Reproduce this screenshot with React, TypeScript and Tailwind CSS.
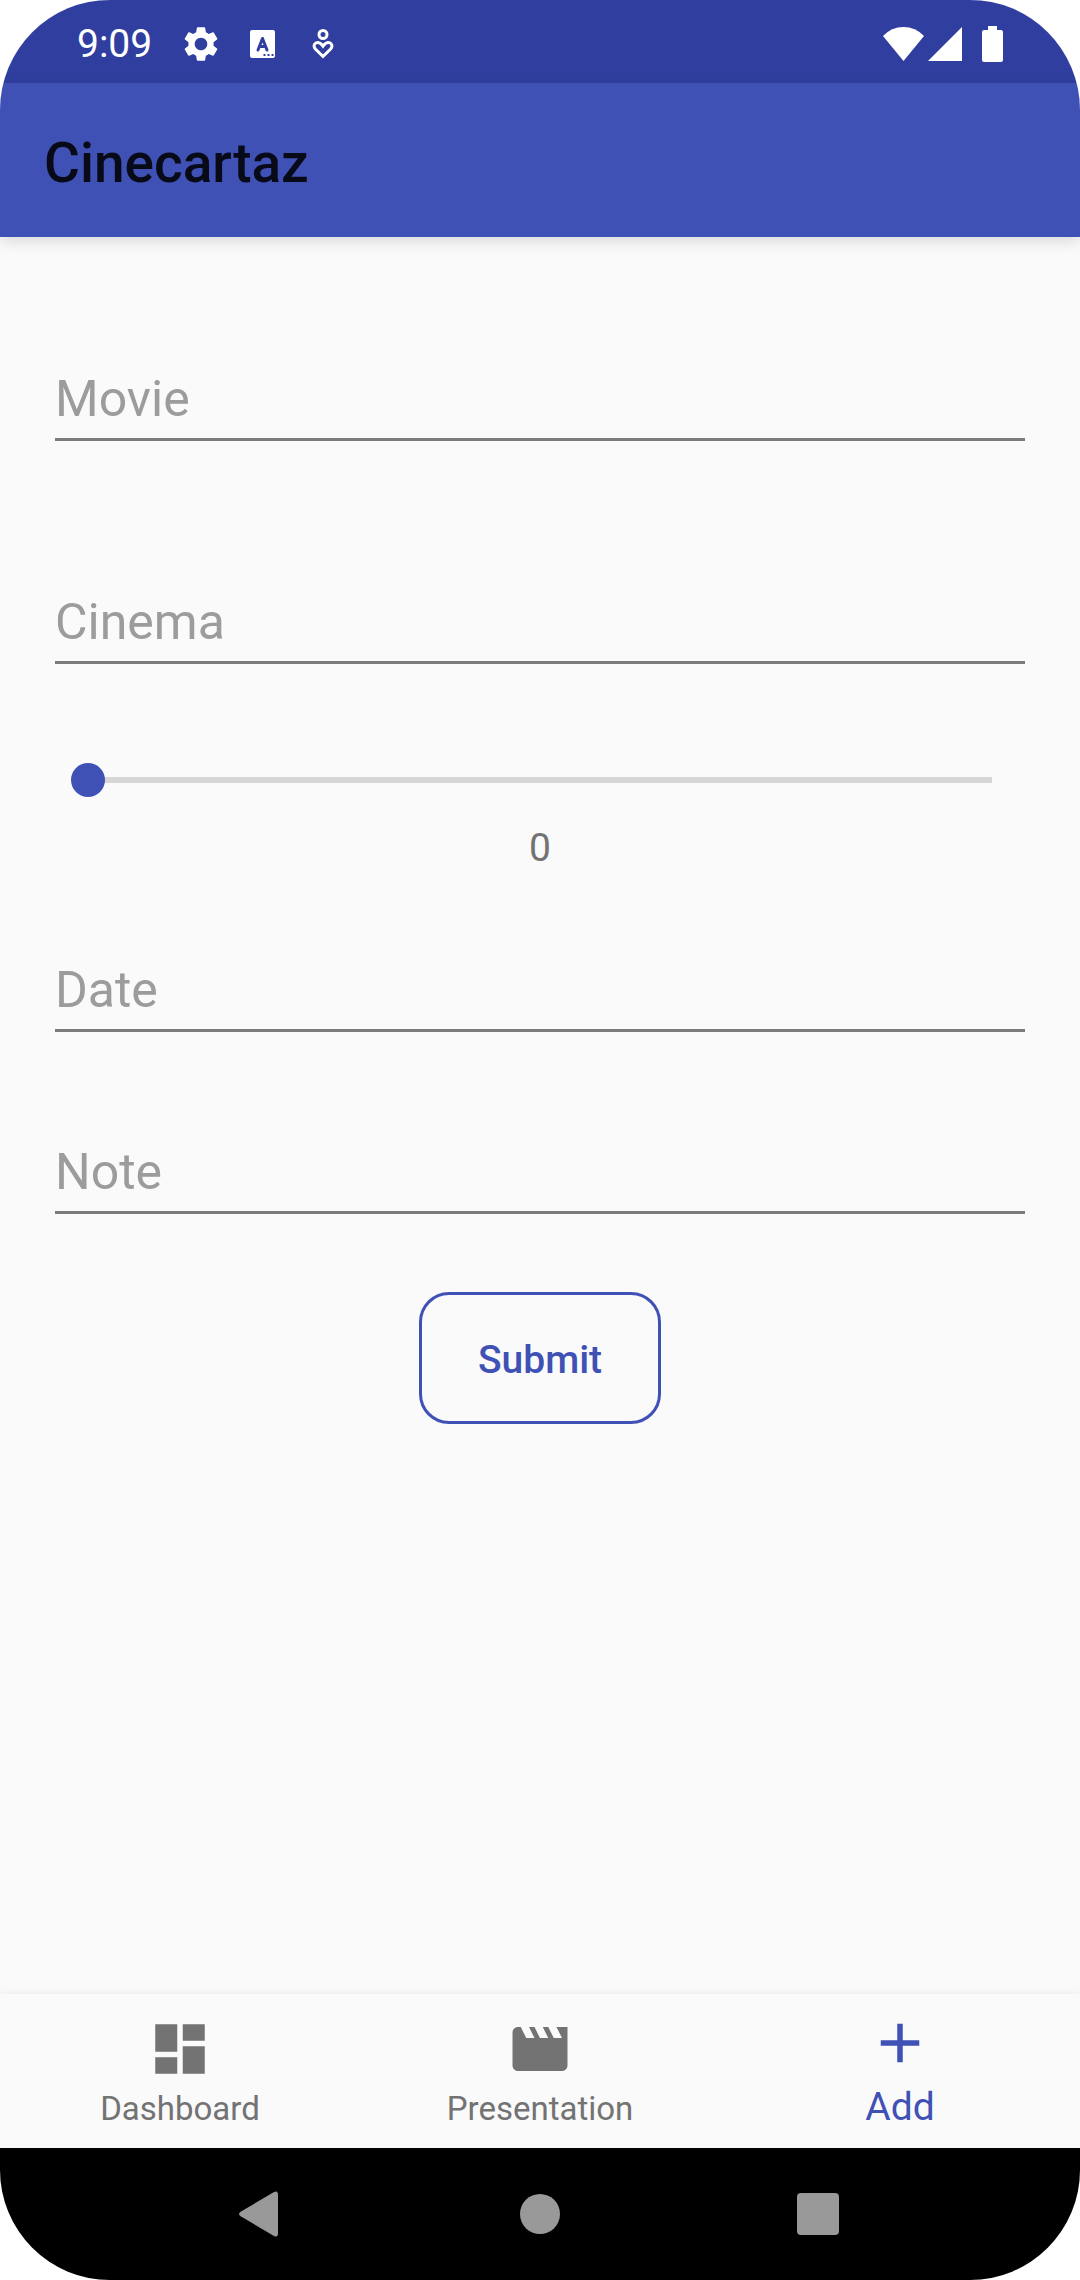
import { useState } from "react";
import type { ReactNode } from "react";
import { MdAdd, MdDashboard, MdMovie, MdSettings } from "react-icons/md";

function StatusBar() {
  return (
    <div className="flex h-[83px] items-center justify-between bg-[#303f9f] pt-1 pr-[77px] pl-[77px] text-white">
      <div className="flex items-center">
        <span className="text-[39px] leading-[46px]">9:09</span>
        <MdSettings className="ml-7 size-[42px]" aria-hidden="true" />
        <svg className="ml-7 h-7 w-[25px]" viewBox="0 0 25 28" aria-hidden="true">
          <rect width="25" height="28" rx="2" fill="currentColor" />
          <path d="M8 20 L12.5 8.5 L17 20 M9.5 16.5 H15.5" fill="none" stroke="#303f9f" strokeWidth="3" strokeLinecap="round" strokeLinejoin="round" />
          <path d="M13.5 24h2v2h-2z M17.5 24h2v2h-2z M21.5 24h2v2h-2z" fill="#303f9f" />
        </svg>
        <svg className="ml-[37px] h-[30px] w-[22px]" viewBox="0 0 22 30" fill="none" stroke="currentColor" strokeWidth="3" aria-hidden="true">
          <circle cx="11" cy="5.5" r="4" />
          <path d="M11 27.5 L3.4 20 C0.5 16.5 3 13.3 6 13.5 C8.3 13.7 9.6 15.2 11 17.2 C12.4 15.2 13.7 13.7 16 13.5 C19 13.3 21.5 16.5 18.6 20 Z" />
        </svg>
      </div>
      <div className="flex items-center">
        <svg className="h-[34px] w-[41px]" viewBox="0 0 41 34" fill="currentColor" aria-hidden="true">
          <path d="M0 9 Q8.500 0 20.500 0 Q32.500 0 41 9 L20.500 34 Z" />
        </svg>
        <svg className="ml-1 size-[34px]" viewBox="0 0 34 34" fill="currentColor" aria-hidden="true">
          <path d="M34 0V34H0Z" />
        </svg>
        <svg className="ml-5 h-9 w-[21px]" viewBox="0 0 21 36" fill="currentColor" aria-hidden="true">
          <path d="M6 0H15V4H19Q21 4 21 6V34Q21 36 19 36H2Q0 36 0 34V6Q0 4 2 4H6Z" />
        </svg>
      </div>
    </div>
  );
}

function Field({ label, className }: { label: string; className: string }) {
  return (
    <input
      type="text"
      aria-label={label}
      placeholder={label}
      className={`block h-[72px] w-full border-b-3 border-[#7c7c7c] bg-transparent pb-[9px] text-[50px] leading-[60px] text-[#212121] outline-none placeholder:text-[#9c9c9c] placeholder:opacity-100 ${className}`}
    />
  );
}

function Tab({ label, icon, active = false }: { label: string; icon: ReactNode; active?: boolean }) {
  return (
    <a
      href={`#${label.toLowerCase()}`}
      aria-current={active ? "page" : undefined}
      className={
        active
          ? "flex flex-col items-center gap-2 pt-4 text-[39px] leading-[46px] text-[#3f51b5]"
          : "flex flex-col items-center gap-2 pt-[22px] text-[33px] leading-[38px] text-[#737373]"
      }
    >
      {icon}
      <span>{label}</span>
    </a>
  );
}

export default function App() {
  const [value, setValue] = useState(0);

  return (
    <div className="min-h-screen bg-white font-[Roboto,sans-serif]">
      <div className="flex min-h-screen flex-col overflow-hidden rounded-[110px] bg-[#fafafa]">
        <StatusBar />
        <header className="flex h-[154px] items-center bg-[#3f51b5] px-11 pt-1.5 shadow-[0_4px_14px_rgba(0,0,0,0.14)]">
          <h1 className="text-[55px] leading-[64px] font-medium text-[#080a17]">Cinecartaz</h1>
        </header>

        <main className="flex-1 px-[55px] pt-[132px]">
          <form className="flex flex-col" onSubmit={(event) => event.preventDefault()}>
            <Field label="Movie" className="" />
            <Field label="Cinema" className="mt-[151px]" />
            <div className="mt-[99px] px-4">
              <input
                id="rating"
                type="range"
                aria-label="Rating"
                min={0}
                max={10}
                value={value}
                onChange={(event) => setValue(Number(event.target.value))}
                className="block h-[34px] w-full appearance-none bg-[linear-gradient(#d6d6d6,#d6d6d6)] bg-[length:calc(100%-34px)_6px] bg-center bg-no-repeat outline-none [&::-webkit-slider-thumb]:size-[34px] [&::-webkit-slider-thumb]:appearance-none [&::-webkit-slider-thumb]:rounded-full [&::-webkit-slider-thumb]:bg-[#3f51b5]"
              />
            </div>
            <output htmlFor="rating" className="mt-7 text-center text-[39px] leading-[46px] text-[#737373]">
              {value}
            </output>
            <Field label="Date" className="mt-[89px]" />
            <Field label="Note" className="mt-[110px]" />
            <button
              type="submit"
              className="mt-[78px] h-[132px] min-w-[242px] self-center rounded-[30px] border-3 border-[#3f51b5] px-12 pt-1 text-[39px] leading-[46px] font-medium text-[#3f51b5]"
            >
              Submit
            </button>
          </form>
        </main>

        <nav aria-label="Sections" className="grid h-[154px] grid-cols-3 bg-[#fafafa] shadow-[0_0_8px_rgba(0,0,0,0.08)]">
          <Tab label="Dashboard" icon={<MdDashboard className="size-[66px]" aria-hidden="true" />} />
          <Tab label="Presentation" icon={<MdMovie className="size-[66px]" aria-hidden="true" />} />
          <Tab label="Add" active icon={<MdAdd className="size-[66px]" aria-hidden="true" />} />
        </nav>

        <div className="z-10 grid h-[132px] grid-cols-3 items-center bg-black px-[123px] text-[#999999]">
          <button type="button" aria-label="Back" className="flex justify-center">
            <svg className="h-[46px] w-[46px]" viewBox="0 0 46 46" fill="currentColor" aria-hidden="true">
              <path d="M2 20.500 L35 1 Q39 -1 39 4 V42 Q39 47 35 45 L2 25.500 Q-2 23 2 20.500Z" />
            </svg>
          </button>
          <button type="button" aria-label="Home" className="flex justify-center">
            <span className="size-10 rounded-full bg-[#999999]" />
          </button>
          <button type="button" aria-label="Recent apps" className="flex justify-center">
            <span className="size-[42px] rounded-[4px] bg-[#999999]" />
          </button>
        </div>
      </div>
    </div>
  );
}
